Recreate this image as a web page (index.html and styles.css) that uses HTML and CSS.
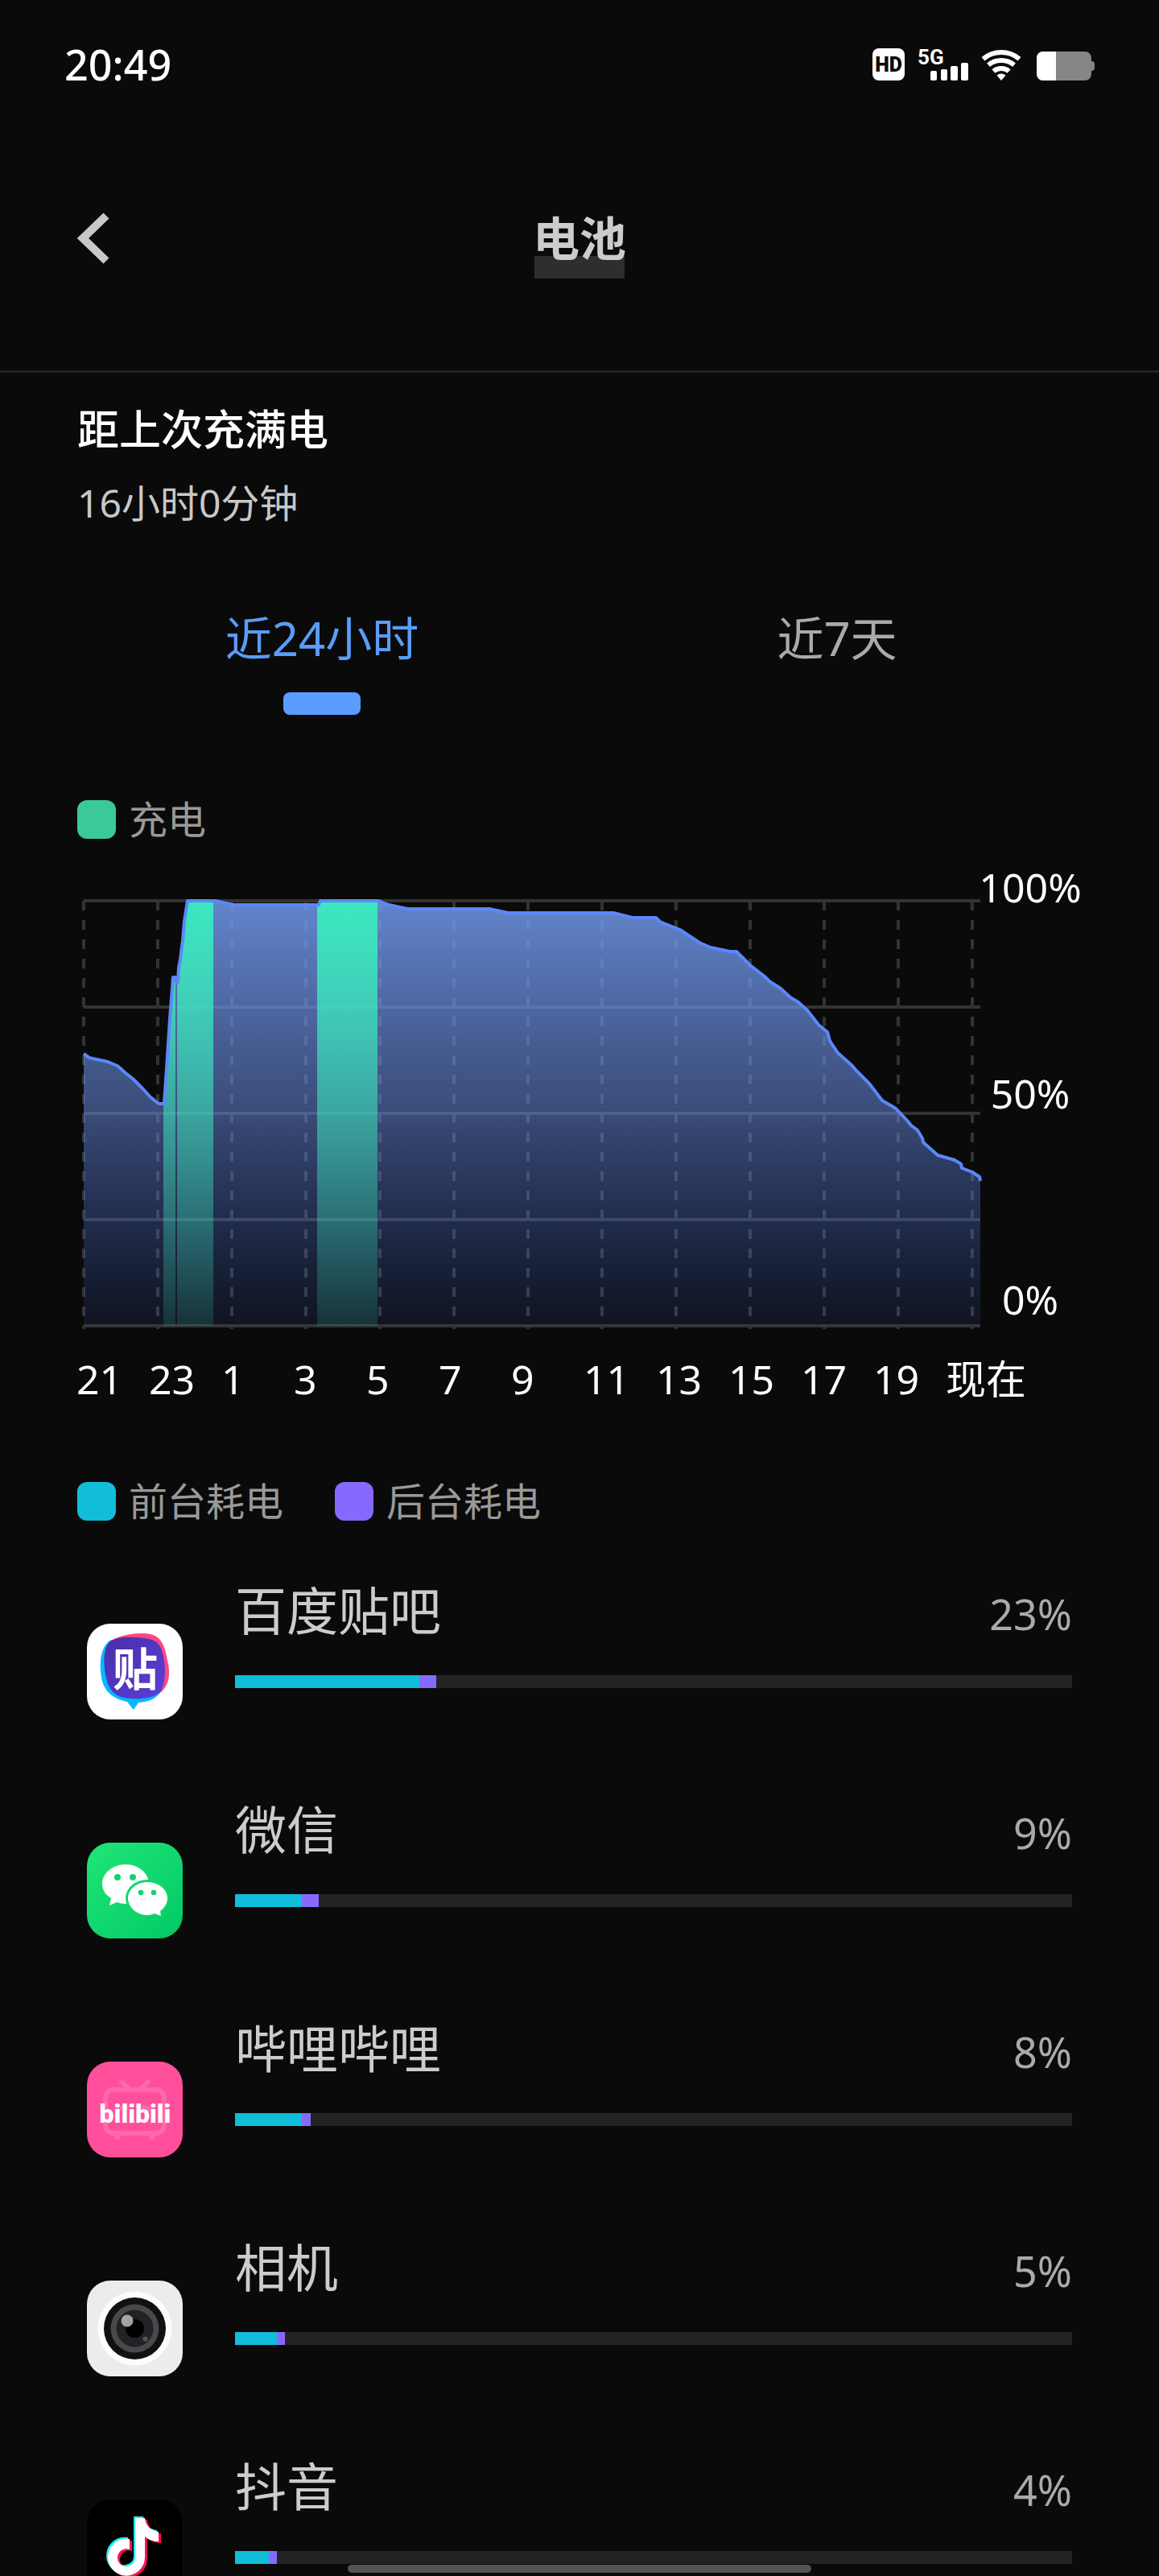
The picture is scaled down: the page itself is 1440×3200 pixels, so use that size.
FILE: index.html
```
<!DOCTYPE html>
<html lang="zh-CN">
  <head>
    <meta charset="UTF-8" />
    <meta name="viewport" content="width=device-width, initial-scale=1.0" />
    <title>电池</title>
    <link rel="stylesheet" href="styles.css">
  </head>
  <body>
    <div class="status-bar">
      <span class="time">20:49</span>
      <div class="status-icons">
        <svg class="icon-hd" width="40" height="40" viewBox="0 0 40 40">
          <rect width="40" height="40" rx="8" fill="#fff" />
          <text x="20" y="29" text-anchor="middle" class="hd-text">HD</text>
        </svg>
        <svg class="icon-signal" width="64" height="40" viewBox="0 0 64 40">
          <text x="0" y="20" class="net-text">5G</text>
          <g fill="#fff">
            <rect x="16" y="28" width="8" height="12" rx="2" />
            <rect x="29" y="26" width="8" height="14" rx="2" />
            <rect x="41" y="22" width="9" height="18" rx="2" />
            <rect x="54" y="18" width="9" height="22" rx="2" />
          </g>
        </svg>
        <svg class="icon-wifi" width="48" height="40" viewBox="0 0 48 40">
          <g fill="none" stroke="#fff" stroke-width="6">
            <path d="M1.5 13.2 A35 35 0 0 1 46.5 13.2" />
            <path d="M8 20.8 A25 25 0 0 1 40 20.8" />
            <path d="M14.4 28.5 A15 15 0 0 1 33.6 28.5" />
          </g>
          <path d="M24 40 L18.5 33.5 A8.5 8.5 0 0 1 29.5 33.5 Z" fill="#fff" />
        </svg>
        <svg class="icon-battery" width="72" height="40" viewBox="0 0 72 40">
          <path d="M8 4 H60 A8 8 0 0 1 68 12 V16 A4 4 0 0 1 72 20 V24 A4 4 0 0 1 68 28 V32 A8 8 0 0 1 60 40 H8 A8 8 0 0 1 0 32 V12 A8 8 0 0 1 8 4 Z" fill="#868686" />
          <path d="M8 4 H24 V40 H8 A8 8 0 0 1 0 32 V12 A8 8 0 0 1 8 4 Z" fill="#fff" />
        </svg>
      </div>
    </div>

    <header class="header">
      <button class="back" aria-label="返回">
        <svg width="42" height="64" viewBox="0 0 42 64">
          <path d="M36 4 L7 32 L36 60" fill="none" stroke="#c8c8c8" stroke-width="10" />
        </svg>
      </button>
      <h1>电池</h1>
    </header>

    <main>
      <section class="summary">
        <h2>距上次充满电</h2>
        <p>16小时0分钟</p>
      </section>

      <div class="tabs" role="tablist">
        <button class="tab active" role="tab" aria-selected="true">近24小时</button>
        <button class="tab" role="tab" aria-selected="false">近7天</button>
      </div>

      <div class="legend legend-charge">
        <span class="legend-item"><i class="swatch charge"></i>充电</span>
      </div>

      <div class="plot">
        <svg class="chart" viewBox="0 0 1118 534">
          <defs>
            <linearGradient id="levelFill" x1="0" y1="0" x2="0" y2="530" gradientUnits="userSpaceOnUse">
              <stop offset="0" stop-color="#749df2" stop-opacity="0.84" />
              <stop offset="0.5" stop-color="#6c90ea" stop-opacity="0.49" />
              <stop offset="1" stop-color="#466ee6" stop-opacity="0.1" />
            </linearGradient>
            <linearGradient id="chargeFill" x1="0" y1="0" x2="0" y2="530" gradientUnits="userSpaceOnUse">
              <stop offset="0" stop-color="#3be8be" />
              <stop offset="1" stop-color="#3be8be" stop-opacity="0.14" />
            </linearGradient>
            <clipPath id="levelArea">
              <path d="M2 530 V192 L9 197 L32 202 L44 207 L54 216 L63 223 L75 235 L85 246 L95 254 L102 254 L105 210 L109 149 L113 97 L116 97 L117 103 L119 103 L120 85 L122 75 L124 58 L125 52 L127 27 L131 2 H165 L188 7 H294 L296 2 H368 L381 7 L404 12 H506 L529 17 H660 L684 23 H713 L718 28 L743 38 L767 54 L781 60 L805 65 H813 L830 82 L848 96 L854 102 L868 111 L880 122 L890 128 L901 138 L915 156 L926 165 L929 176 L939 191 L957 207 L962 213 L978 229 L994 250 L1011 260 L1026 276 L1030 281 L1038 287 L1044 297 L1045 302 L1063 318 L1084 324 L1092 329 L1093 334 L1106 339 L1115 345 L1116 350 V530 Z" />
            </clipPath>
          </defs>
          <g stroke="#333" stroke-width="4">
            <path d="M2 2 H1116 M2 134 H1116 M2 266 H1116 M2 398 H1116 M2 530 H1116" />
            <path stroke-dasharray="12 12" d="M2 2 V534 M94 2 V534 M186 2 V534 M278 2 V534 M370 2 V534 M462 2 V534 M554 2 V534 M646 2 V534 M738 2 V534 M830 2 V534 M922 2 V534 M1014 2 V534 M1106 2 V534" />
          </g>
          <g clip-path="url(#levelArea)">
            <rect x="2" y="0" width="1114" height="530" fill="url(#levelFill)" />
            <rect x="101" y="0" width="15" height="530" fill="url(#chargeFill)" />
            <rect x="118" y="0" width="45" height="530" fill="url(#chargeFill)" />
            <rect x="292" y="0" width="75" height="530" fill="url(#chargeFill)" />
          </g>
          <path class="level-line" d="M2 192 L9 197 L32 202 L44 207 L54 216 L63 223 L75 235 L85 246 L95 254 L102 254 L105 210 L109 149 L113 97 L116 97 L117 103 L119 103 L120 85 L122 75 L124 58 L125 52 L127 27 L131 2 H165 L188 7 H294 L296 2 H368 L381 7 L404 12 H506 L529 17 H660 L684 23 H713 L718 28 L743 38 L767 54 L781 60 L805 65 H813 L830 82 L848 96 L854 102 L868 111 L880 122 L890 128 L901 138 L915 156 L926 165 L929 176 L939 191 L957 207 L962 213 L978 229 L994 250 L1011 260 L1026 276 L1030 281 L1038 287 L1044 297 L1045 302 L1063 318 L1084 324 L1092 329 L1093 334 L1106 339 L1115 345 L1116 350" />
        </svg>
        <div class="y-axis">
          <span>100%</span>
          <span>50%</span>
          <span>0%</span>
        </div>
      </div>
      <div class="x-axis">
        <span>21</span>
        <span>23</span>
        <span>1</span>
        <span>3</span>
        <span>5</span>
        <span>7</span>
        <span>9</span>
        <span>11</span>
        <span>13</span>
        <span>15</span>
        <span>17</span>
        <span>19</span>
        <span>现在</span>
      </div>

      <div class="legend legend-usage">
        <span class="legend-item"><i class="swatch front"></i>前台耗电</span>
        <span class="legend-item"><i class="swatch back-use"></i>后台耗电</span>
      </div>

      <ul class="apps">
        <li class="app">
          <svg class="app-icon" viewBox="0 0 120 120">
            <defs>
              <linearGradient id="tieba" x1="0" y1="0" x2="1" y2="1">
                <stop offset="0" stop-color="#482fa6" />
                <stop offset="1" stop-color="#5b3edb" />
              </linearGradient>
            </defs>
            <rect width="119" height="119" rx="29" fill="#fff" />
            <path d="M28 22 C44 12 70 10 82 14 C95 18 98 34 101 50 C104 66 101 80 88 88 Z" fill="#ff4683" />
            <path d="M30 20 C18 27 16 45 17 58 C18 78 26 92 50 97 L58 107 L64 98 C76 97 86 94 92 84 Z" fill="#04b9ff" />
            <path d="M28 23 C36 16 55 16 72 18 C88 20 92 27 95 40 C98 56 98 72 92 84 C84 93 66 94 54 93 C36 92 28 84 24 68 C21 54 19 32 28 23 Z" fill="url(#tieba)" />
            <text x="60" y="77" text-anchor="middle" class="tieba-text">贴</text>
          </svg>
          <div class="app-body">
            <div class="app-head"><span class="name">百度贴吧</span><span class="percent">23%</span></div>
            <div class="bar"><span class="front" style="width: 22%"></span><span class="back-use" style="width: 2%"></span></div>
          </div>
        </li>
        <li class="app">
          <svg class="app-icon" viewBox="0 0 120 120">
            <defs>
              <linearGradient id="wechat" x1="0" y1="0" x2="1" y2="1">
                <stop offset="0" stop-color="#1fe677" />
                <stop offset="1" stop-color="#03c965" />
              </linearGradient>
            </defs>
            <rect width="119" height="119" rx="29" fill="url(#wechat)" />
            <path d="M48 27 C64 27 77 38 77 51 C77 65 64 76 48 76 C44 76 41 75 37 74 L28 78 L30 69 C23 65 19 58 19 51 C19 38 32 27 48 27 Z" fill="#fff" />
            <ellipse cx="75" cy="69" rx="27" ry="23" fill="#10d86e" />
            <path d="M75 49 C89 49 100 58 100 69 C100 76 96 81 91 85 L92 91 L84 88 C81 89 78 90 75 90 C62 90 51 80 51 69 C51 58 62 49 75 49 Z" fill="#fff" />
            <g fill="#12d36f">
              <circle cx="38" cy="43" r="4" />
              <circle cx="57" cy="43" r="4" />
              <circle cx="67" cy="62" r="3.3" />
              <circle cx="83" cy="62" r="3.3" />
            </g>
          </svg>
          <div class="app-body">
            <div class="app-head"><span class="name">微信</span><span class="percent">9%</span></div>
            <div class="bar"><span class="front" style="width: 8%"></span><span class="back-use" style="width: 2%"></span></div>
          </div>
        </li>
        <li class="app">
          <svg class="app-icon" viewBox="0 0 120 120">
            <rect width="119" height="119" rx="29" fill="#ff4f9a" />
            <g fill="none" stroke="#ff68aa" stroke-width="6" stroke-linecap="round">
              <rect x="23" y="35" width="73" height="54" rx="10" />
              <path d="M43 25 L54 35 M76 25 L66 35 M37 59 L49 57 M70 57 L82 60" />
            </g>
            <circle cx="38" cy="93" r="4" fill="#ff68aa" />
            <circle cx="81" cy="93" r="4" fill="#ff68aa" />
            <text x="60" y="76" text-anchor="middle" class="bili-text">bilibili</text>
          </svg>
          <div class="app-body">
            <div class="app-head"><span class="name">哔哩哔哩</span><span class="percent">8%</span></div>
            <div class="bar"><span class="front" style="width: 8%"></span><span class="back-use" style="width: 1%"></span></div>
          </div>
        </li>
        <li class="app">
          <svg class="app-icon" viewBox="0 0 120 120">
            <rect width="119" height="119" rx="29" fill="#ececec" />
            <circle cx="59.5" cy="59.5" r="46" fill="#fcfcfc" />
            <circle cx="59.5" cy="59.5" r="38.5" fill="#111" />
            <circle cx="59.5" cy="59.5" r="30" fill="#494949" />
            <circle cx="59.5" cy="59.5" r="23" fill="#232126" />
            <circle cx="59.5" cy="59.5" r="11.5" fill="#000" />
            <circle cx="50" cy="50" r="7.5" fill="#c8c8c8" fill-opacity="0.8" />
            <circle cx="72.5" cy="72.5" r="3" fill="#555" />
          </svg>
          <div class="app-body">
            <div class="app-head"><span class="name">相机</span><span class="percent">5%</span></div>
            <div class="bar"><span class="front" style="width: 5%"></span><span class="back-use" style="width: 1%"></span></div>
          </div>
        </li>
        <li class="app">
          <svg class="app-icon" viewBox="0 0 120 120">
            <defs>
              <path id="note" d="M58 21 H70 C71 31 78 37 87 38 V50 C80 50 75 48 70 44 V70 A23 23 0 1 1 51 47 V60 A11 11 0 1 0 58 70 Z" />
            </defs>
            <rect width="119" height="119" rx="29" fill="#000" />
            <use href="#note" fill="#1ef0ec" />
            <use href="#note" x="5" y="4" fill="#ff0f50" />
            <use href="#note" x="2" y="2" fill="#fff" />
          </svg>
          <div class="app-body">
            <div class="app-head"><span class="name">抖音</span><span class="percent">4%</span></div>
            <div class="bar"><span class="front" style="width: 4%"></span><span class="back-use" style="width: 1%"></span></div>
          </div>
        </li>
      </ul>
    </main>
    <div class="home-indicator"></div>
  </body>
</html>
```
FILE: styles.css
```
* {
  box-sizing: border-box;
}

body {
  margin: 0;
  height: 100vh;
  overflow: hidden;
  background-color: #0a0a0a;
  color: #fff;
  font-family: 'Noto Sans', 'Noto Sans CJK SC', sans-serif;
  font-size: 48px;
}

h1,
h2,
p,
ul {
  margin: 0;
  padding: 0;
}

button {
  border: none;
  background: none;
  padding: 0;
  font-family: inherit;
  color: inherit;
  cursor: pointer;
}

.status-bar {
  display: flex;
  justify-content: space-between;
  align-items: center;
  padding: 44px 80px 16px;
}

.time {
  font-size: 52px;
  line-height: 72px;
  font-weight: 500;
}

.status-icons {
  display: flex;
  align-items: center;
  gap: 16px;
}

.status-icons svg {
  overflow: visible;
}

.icon-battery {
  margin-left: 4px;
}

.hd-text {
  font: 900 25px Roboto, sans-serif;
  fill: #0a0a0a;
}

.net-text {
  font: bold 26px Roboto, sans-serif;
  fill: #fff;
}

.header {
  display: grid;
  grid-template-columns: 1fr auto 1fr;
  align-items: center;
  padding: 114px 96px;
  border-bottom: 3px solid #222;
}

.back {
  justify-self: start;
  display: flex;
}

.header h1 {
  font-size: 58px;
  line-height: 100px;
  font-weight: bold;
  color: #ccc;
  background: linear-gradient(#2e2e2e, #2e2e2e) center bottom / 112px 28px no-repeat;
}

.summary {
  padding: 34px 96px 0;
}

.summary h2 {
  font-size: 52px;
  line-height: 72px;
  font-weight: 500;
}

.summary p {
  margin-top: 20px;
  line-height: 72px;
  color: #c8c8c8;
}

.tabs {
  display: grid;
  grid-template-columns: 1fr 1fr;
  margin-top: 92px;
  padding: 0 80px;
}

.tab {
  display: flex;
  flex-direction: column;
  align-items: center;
  gap: 27px;
  font-size: 58px;
  line-height: 80px;
  color: #aaa;
}

.tab.active {
  color: #5a9cfa;
}

.tab::after {
  content: '';
  width: 96px;
  height: 28px;
  border-radius: 8px;
}

.tab.active::after {
  background-color: #5a9dff;
}

.legend {
  display: flex;
  gap: 64px;
  padding: 0 96px;
  line-height: 48px;
  color: #999;
}

.legend-charge {
  margin-top: 106px;
}

.legend-usage {
  margin-top: 98px;
}

.legend-item {
  display: flex;
  align-items: center;
  gap: 16px;
}

.swatch {
  width: 48px;
  height: 48px;
  border-radius: 12px;
}

.charge {
  background-color: #3ac999;
}

.front {
  background-color: #11bdd9;
}

.back-use {
  background-color: #8769ff;
}

.plot {
  display: flex;
  margin-top: 30px;
  padding: 0 100px 0 102px;
}

.chart {
  flex: 1;
  min-width: 0;
  margin-top: 45px;
}

.level-line {
  fill: none;
  stroke: #5b87fa;
  stroke-width: 4;
  stroke-linejoin: round;
}

.y-axis {
  display: flex;
  flex-direction: column;
  justify-content: space-between;
  width: 120px;
  margin-bottom: 7px;
  font-size: 50px;
  line-height: 60px;
  text-align: center;
}

/* 100% is wider than the column, keep all three centred on it */
.y-axis span {
  align-self: center;
}

.x-axis {
  display: grid;
  grid-template-columns: repeat(13, minmax(0, 1fr));
  margin-top: 32px;
  padding: 0 175px 0 95px;
  font-size: 50px;
  line-height: 60px;
  white-space: nowrap;
}

.apps {
  display: flex;
  flex-direction: column;
  gap: 92px;
  margin-top: 68px;
  padding: 0 108px;
  list-style: none;
}

.app {
  display: flex;
  gap: 64px;
}

.app-icon {
  flex: none;
  width: 120px;
  height: 120px;
  margin-top: 60px;
}

.app-body {
  flex: 1;
}

.app-head {
  display: flex;
  justify-content: space-between;
  align-items: baseline;
  margin-bottom: 32px;
  line-height: 88px;
}

.name {
  font-size: 64px;
  color: #ccc;
}

.percent {
  font-size: 52px;
  color: #aaa;
}

.bar {
  display: flex;
  height: 16px;
  background-color: #232323;
}

.tieba-text {
  font: bold 56px 'Noto Sans CJK SC', sans-serif;
  fill: #fff;
}

.bili-text {
  font: 900 32px Roboto, sans-serif;
  fill: #fff;
}

.home-indicator {
  position: fixed;
  left: 30%;
  right: 30%;
  bottom: 4px;
  height: 10px;
  border-radius: 5px;
  background-color: #545454;
}
```
